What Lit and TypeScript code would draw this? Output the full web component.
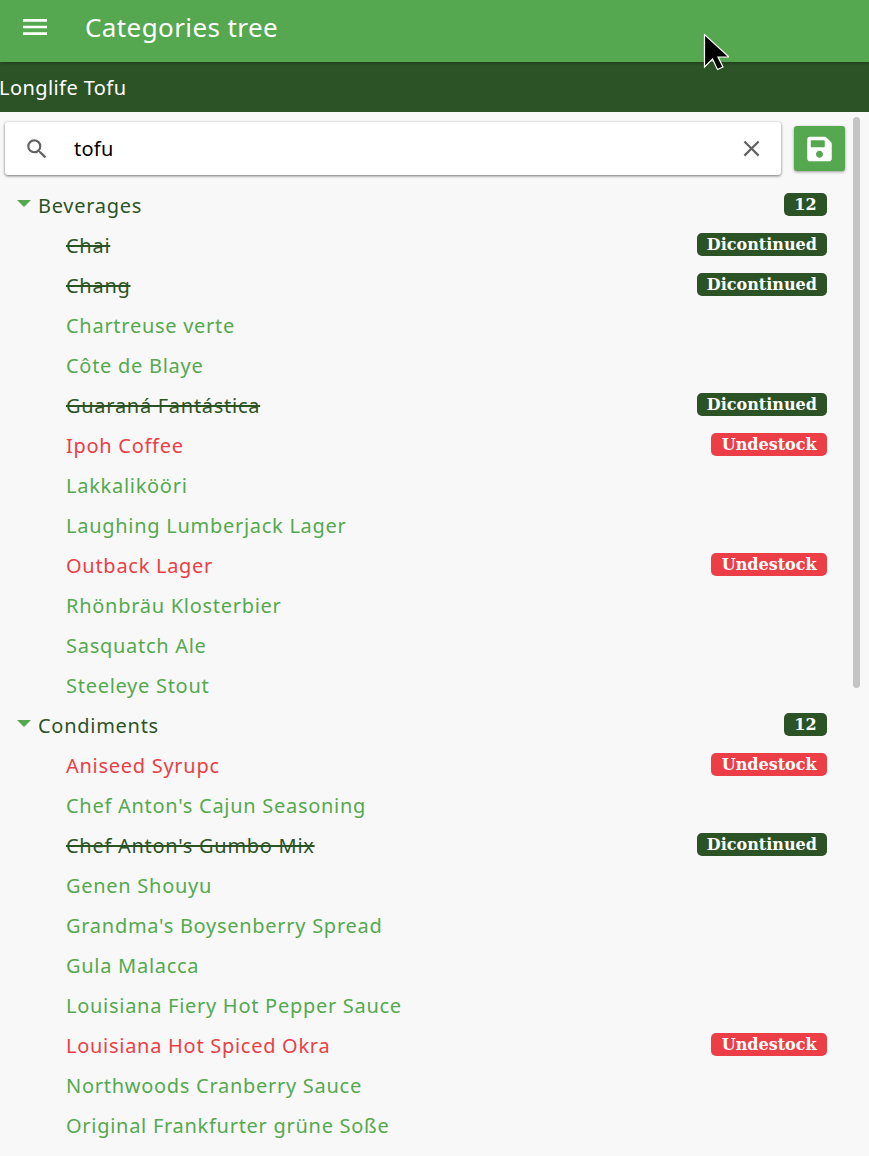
import { LitElement, html, css, svg } from "lit";
import { customElement } from "lit/decorators.js";

type Item = [string, "" | "d" | "u"];
const groups: { name: string; count: number; items: Item[] }[] = [
  { name: "Beverages", count: 12, items: [
    ["Chai", "d"], ["Chang", "d"], ["Chartreuse verte", ""], ["Côte de Blaye", ""],
    ["Guaraná Fantástica", "d"], ["Ipoh Coffee", "u"], ["Lakkalikööri", ""],
    ["Laughing Lumberjack Lager", ""], ["Outback Lager", "u"], ["Rhönbräu Klosterbier", ""],
    ["Sasquatch Ale", ""], ["Steeleye Stout", ""],
  ]},
  { name: "Condiments", count: 12, items: [
    ["Aniseed Syrupc", "u"], ["Chef Anton's Cajun Seasoning", ""], ["Chef Anton's Gumbo Mix", "d"],
    ["Genen Shouyu", ""], ["Grandma's Boysenberry Spread", ""], ["Gula Malacca", ""],
    ["Louisiana Fiery Hot Pepper Sauce", ""], ["Louisiana Hot Spiced Okra", "u"],
    ["Northwoods Cranberry Sauce", ""], ["Original Frankfurter grüne Soße", ""],
  ]},
];

@customElement("app-root")
export class AppRoot extends LitElement {
  static styles = css`
    :host { display: block; height: 1156px; overflow: hidden; position: relative; background: #f8f8f8;
      font-family: "Noto Sans", "Open Sans", sans-serif; }
    .toolbar { height: 62px; background: #55a84f; color: #fff; display: flex; align-items: center; position: relative; z-index: 2;
      box-shadow: 0 1px 3px rgba(0,0,0,.3); }
    .menu { width: 32px; height: 32px; margin-left: 19px; margin-right: 34px; display: block; margin-top: -8px; fill: #fff; }
    .title { font-size: 26px; letter-spacing: 0.4px; line-height: 32px; margin-top: -9px; }
    .sub { height: 50px; background: #2c5326; color: #fff; font-size: 20px; letter-spacing: 0.42px; line-height: 52px; text-indent: -1px; }
    .body { display: flex; align-items: flex-start; position: relative; }
    .main { width: 827px; flex: none; }
    .tools { display: flex; align-items: flex-start; padding: 10px 0 0 5px; }
    .search { width: 776px; height: 53px; background: #fff; border-radius: 3px; box-shadow: 0 1px 3px rgba(0,0,0,.55);
      display: flex; align-items: center; color: #000; font-size: 20px; flex: none; }
    .search svg { fill: #616161; display: block; flex: none; }
    .s-icon { margin-left: 19px; }
    .s-text { flex: 1; margin-left: 24px; letter-spacing: 0.25px; }
    .x-icon { margin-right: 16px; }
    .save { width: 51px; height: 45px; margin: 4px 0 0 13px; background: #55a84f; border-radius: 3px; flex: none;
      display: flex; align-items: center; justify-content: center; box-shadow: 0 1px 3px rgba(0,0,0,.4); }
    .save svg { fill: #fff; display: block; }
    .row { height: 40px; display: flex; align-items: center; font-size: 20px; letter-spacing: 0.72px; line-height: 38px; }
    .rows { padding-top: 10px; }
    .cat { color: #2c5326; }
    .caret { width: 0; height: 0; border-left: 7px solid transparent; border-right: 7px solid transparent; border-top: 7px solid #55a84f;
      margin: -3px 7px 0 17px; flex: none; }
    .leaf { padding-left: 66px; color: #55a84f; }
    .leaf.u { color: #ec3e46; }
    .name { flex: 1; margin-top: 2px; }
    .leaf.d { color: #2c5326; }
    .leaf.d .name { text-decoration: line-through; }
    .badge { font-family: "DejaVu Serif", serif; font-weight: 700; font-size: 16px; letter-spacing: 0; line-height: 23px; height: 23px; color: #fff;
      border-radius: 5px; padding: 0 10.4px; margin-top: -2px; display: inline-block; }
    .badge.d { background: #2c5326; padding: 0 10.1px; }
    .badge.c { background: #2c5326; }
    .badge.u { background: #ec3e46; }
    .scroll { position: absolute; left: 853px; top: 5px; width: 7px; height: 571px; background: #c4c4c4; border-radius: 4px; }
    .cursor { position: absolute; left: 703px; top: 33px; z-index: 5; display: block; }
  `;

  render() {
    return html`
      <div class="toolbar">
        <svg class="menu" viewBox="0 0 24 24"><path d="M3 18h18v-2H3v2zm0-5h18v-2H3v2zm0-7v2h18V6H3z"/></svg>
        <div class="title">Categories tree</div>
      </div>
      <div class="sub">Longlife Tofu</div>
      <div class="body">
        <div class="main">
          <div class="tools">
            <div class="search">
              <svg class="s-icon" width="26" height="26" viewBox="0 0 24 24"><path d="M15.5 14h-.79l-.28-.27A6.47 6.47 0 0 0 16 9.5 6.5 6.5 0 1 0 9.5 16c1.61 0 3.09-.59 4.23-1.57l.27.28v.79l5 4.99L20.49 19l-4.99-5zm-6 0C7.01 14 5 11.99 5 9.5S7.01 5 9.5 5 14 7.01 14 9.5 11.99 14 9.5 14z"/></svg>
              <div class="s-text">tofu</div>
              <svg class="x-icon" width="27" height="27" viewBox="0 0 24 24"><path d="M19 6.41L17.59 5 12 10.59 6.41 5 5 6.41 10.59 12 5 17.59 6.41 19 12 13.41 17.59 19 19 17.59 13.41 12z"/></svg>
            </div>
            <div class="save">
              <svg width="25" height="28" viewBox="0 0 448 512"><path d="M433.941 129.941l-83.882-83.882A48 48 0 0 0 316.118 32H48C21.49 32 0 53.49 0 80v352c0 26.51 21.49 48 48 48h352c26.51 0 48-21.49 48-48V163.882a48 48 0 0 0-14.059-33.941zM224 416c-35.346 0-64-28.654-64-64 0-35.346 28.654-64 64-64s64 28.654 64 64c0 35.346-28.654 64-64 64zm96-304.52V212c0 6.627-5.373 12-12 12H76c-6.627 0-12-5.373-12-12V108c0-6.627 5.373-12 12-12h228.52c3.183 0 6.235 1.264 8.485 3.515l3.48 3.48A11.996 11.996 0 0 1 320 111.48z"/></svg>
            </div>
          </div>
          <div class="rows">
            ${groups.map(g => html`
              <div class="row cat"><span class="caret"></span><span class="name">${g.name}</span><span class="badge c">${g.count}</span></div>
              ${g.items.map(([n, k]) => html`
                <div class="row leaf ${k}"><span class="name">${n}</span>
                  ${k === "d" ? html`<span class="badge d">Dicontinued</span>` : k === "u" ? html`<span class="badge u">Undestock</span>` : ""}
                </div>`)}
            `)}
          </div>
        </div>
        <div class="scroll"></div>
      </div>
      <svg class="cursor" width="26" height="38" viewBox="0 0 26 38">
        ${svg`<path d="M1.5 1.5V34l8-8 5 10.5 5.5-2.5-5-10h11z" fill="#000" stroke="#fff" stroke-width="1.2"/>`}
      </svg>
    `;
  }
}
